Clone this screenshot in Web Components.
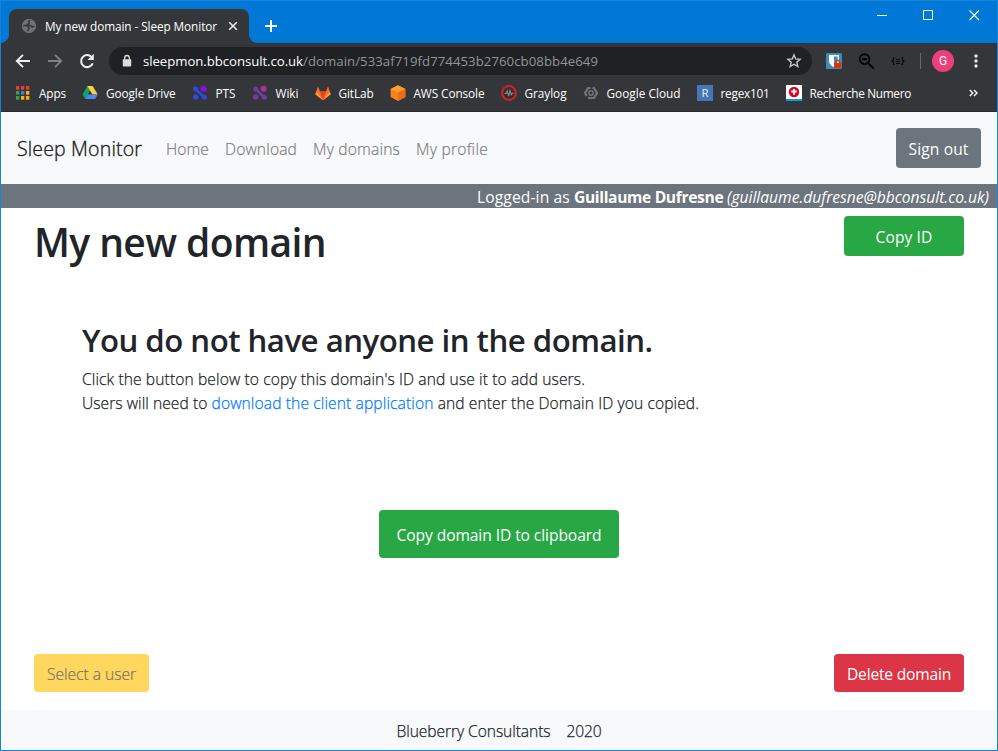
<!DOCTYPE html>
<html lang="en">
<head>
<meta charset="utf-8">
<title>My new domain - Sleep Monitor</title>
<style>
html,body{margin:0;height:100%;overflow:hidden}
body{font-family:"Open Sans","Noto Sans",sans-serif;color:#212529}
</style>
</head>
<body>
<browser-window>
  <title-bar slot="chrome"></title-bar>
  <tool-bar slot="chrome"></tool-bar>
  <bookmark-bar slot="chrome"></bookmark-bar>
  <site-nav></site-nav>
  <login-strip></login-strip>
  <domain-page></domain-page>
  <site-footer></site-footer>
</browser-window>
<script>
const define = (name, css, html) => customElements.define(name, class extends HTMLElement {
  constructor() {
    super();
    this.attachShadow({mode: 'open'}).innerHTML = `<style>*{box-sizing:border-box}${css}</style>${html}`;
  }
});

/* Text run that spreads its letters over a given width. */
customElements.define('ui-text', class extends HTMLElement {
  constructor() {
    super();
    this.attachShadow({mode: 'open'}).innerHTML =
      '<style>:host{display:inline-block;white-space:pre;flex:none}span{display:inline-block}</style><span><slot></slot></span>';
  }
  connectedCallback() {
    const w = parseFloat(this.getAttribute('w'));
    const span = this.shadowRoot.querySelector('span');
    const n = this.textContent.length;
    const natural = span.getBoundingClientRect().width;
    span.style.letterSpacing = ((w - natural) / n).toFixed(4) + 'px';
    this.style.width = w + 'px';
  }
});

/* Bootstrap-like button. */
define('ui-button', `
:host{display:flex;align-items:center;justify-content:center;box-sizing:border-box;flex:none;border-radius:4px;color:#fff;height:40px;padding-top:2px;font-size:15.6px;line-height:24px}
:host([kind=secondary]){background:#6c757d}
:host([kind=success]){background:#28a745}
:host([kind=danger]){background:#dc3545}
:host([kind=warning]){background:#ffd75f;color:#76756a;font-weight:300;-webkit-text-stroke:.2px}
`, `<slot></slot>`);

define('browser-window', `
:host{display:flex;flex-direction:column;width:998px;height:751px;box-sizing:border-box;border:1px solid #1883d7;background:#fff}
.page{flex:1;display:flex;flex-direction:column;min-height:0}
`, `<slot name="chrome"></slot><div class="page"><slot></slot></div>`);

define('title-bar', `
:host{display:flex;height:42px;background:#0078d7;color:#fff;padding-left:8px}
.tab{position:relative;margin-top:8px;width:240px;height:34px;background:#35363a;border-radius:8px 8px 0 0;display:flex;align-items:center;padding-left:12px;font-size:11.8px}
.tab::before,.tab::after{content:"";position:absolute;bottom:0;width:8px;height:8px}
.tab::before{left:-8px;background:radial-gradient(circle at 0 0,#0078d7 7.5px,#35363a 8px)}
.tab::after{right:-8px;background:radial-gradient(circle at 100% 0,#0078d7 7.5px,#35363a 8px)}
ui-text{margin:0 10px 0 8px}
.plus{margin:18px 0 0 15px}
.ctl{margin-left:auto;display:flex;gap:36px;padding:9px 17px 0 0}
svg{display:block;flex:none}
`, `<div class="tab">
<svg width="16" height="16" viewBox="0 0 16 16"><circle cx="8" cy="8" r="7" fill="#6d7074"/><path d="M9.300 2.200C8 2.600 7.300 3.500 8 4.300c.7.600-.1 1.500-.9 1.600-1 .2-.8 1.300.1 1.500 1.400.2 2.500-.2 3.100.8.500.8 2 .6 3 0M2.300 7.500h3.200c1 .1.800 1.300 1.700 1.600 1 .3 1.200 1.300.3 1.900-.5.400-.3 1.500-.6 2.300" fill="none" stroke="#35363a" stroke-width="1.500"/><circle cx="8" cy="8" r="6.500" fill="none" stroke="#6d7074"/></svg>
<ui-text w="172">My new domain - Sleep Monitor</ui-text>
<svg width="12" height="12" viewBox="0 0 12 12"><path d="M2.200 2.200l7.600 7.600M9.800 2.200L2.200 9.800" stroke="#e8eaed" stroke-width="1.600"/></svg></div>
<svg class="plus" width="13" height="13" viewBox="0 0 13 13"><path d="M7 1v12M1 7h12" stroke="#fff" stroke-width="2"/></svg>
<div class="ctl"><svg width="10" height="11"><path d="M0 5.500h10" stroke="#fff"/></svg><svg width="10" height="10"><path d="M.5 .5h9v9h-9z" fill="none" stroke="#fff"/></svg><svg width="11" height="11"><path d="M.5 .5l9.500 9.500M10 .5L.5 10" stroke="#fff" stroke-width="1.100"/></svg></div>`);

define('tool-bar', `
:host{display:flex;height:36px;background:#35363a;align-items:center;padding-left:14px}
svg{display:block;flex:none}
.omni{width:703px;height:28px;border-radius:14px;background:#202124;display:flex;align-items:center;margin-left:14px;padding:0 10px 0 13px;font-size:13.2px;color:#fff}
.path{color:#929599}
.star{margin-left:auto}
.ext{display:flex;align-items:center;gap:16px;margin-left:14px}
.sep{width:1px;height:16px;background:#67686b;margin:0 11px 0 15px}
.avatar{width:22px;height:22px;border-radius:50%;background:#ec407a;color:#fff;font:12px/22px Roboto,sans-serif;text-align:center}
`, `
<svg width="16" height="16" viewBox="0 0 16 16"><path d="M15 8H2.500M8 1.800L1.800 8 8 14.200" fill="none" stroke="#eef0f2" stroke-width="1.900"/></svg>
<svg width="16" height="16" viewBox="0 0 16 16" style="margin-left:16px"><path d="M1 8h12.500M8 1.800L14.200 8 8 14.200" fill="none" stroke="#7e7f82" stroke-width="1.900"/></svg>
<svg width="16" height="16" viewBox="0 0 16 16" style="margin-left:16px"><path d="M13.700 10.300A6 6 0 1 1 12.500 4" fill="none" stroke="#eef0f2" stroke-width="2"/><path d="M14.800 .8v6.200H8.600z" fill="#eef0f2"/></svg>
<div class="omni"><svg width="10" height="14" viewBox="0 0 10 14" style="margin-right:11px"><path d="M.8 5.200h8.400v6.600q0 .8-.8.800H1.600q-.8 0-.8-.8z" fill="#dadce0"/><path d="M2.700 5.500V3.800a2.300 2.300 0 0 1 4.600 0v1.700" fill="none" stroke="#dadce0" stroke-width="1.300"/></svg><ui-text w="160">sleepmon.bbconsult.co.uk</ui-text><ui-text w="295" class="path">/domain/533af719fd774453b2760cb08bb4e649</ui-text>
<svg class="star" width="16" height="16" viewBox="0 0 16 16"><path d="M8 1.900l1.700 4 4.400.4-3.300 2.900 1 4.300L8 11.200l-3.800 2.300 1-4.300L1.900 6.300l4.400-.4z" fill="none" stroke="#c4c7ca" stroke-width="1.400"/></svg></div>
<div class="ext">
<svg width="16" height="16" viewBox="0 0 16 16"><rect width="16" height="16" rx="1.500" fill="#3c8dbc"/><path d="M3 2h10v6c0 3-2.500 5-5 6.200C5.500 13 3 11 3 8z" fill="#fff"/><path d="M8 3.500h3.600v5c0 1.800-1.700 3-3.600 4z" fill="#3c8dbc"/><path d="M10 10.500V9a1.800 1.800 0 0 1 3.600 0v1.500" fill="none" stroke="#cf3508" stroke-width="1.200"/><path d="M8 10h7.500v5H8z" fill="#d63808"/></svg>
<svg width="17" height="17" viewBox="0 0 17 17"><circle cx="6.500" cy="6.200" r="4.900" fill="none" stroke="#000" stroke-width="1.900"/><path d="M4 6.200h5M10 10l5.800 5.800" stroke="#000" stroke-width="2"/></svg>
<svg width="14" height="16" viewBox="0 0 14 16"><path d="M3.500 4.500h-1v2.500L1 8l1.500 1v2.500h1M10.500 4.500h1v2.500L13 8l-1.500 1v2.500h-1" fill="none" stroke="#0a0a0a" stroke-width="1.200"/><path d="M5 6.500h4M5 8.500h4M5 10.500h4" stroke="#0a0a0a"/></svg></div>
<div class="sep"></div><div class="avatar">G</div>
<svg width="4" height="14" viewBox="0 0 4 14" style="margin-left:20px"><g fill="#e8eaed"><circle cx="2" cy="2" r="1.700"/><circle cx="2" cy="7" r="1.700"/><circle cx="2" cy="12" r="1.700"/></g></svg>`);

const drive = '<path d="M5.300 1h5.400L5.800 9.600 3.200 14 .5 9.400z" fill="#12a45c"/><path d="M5.300 1h5.400l5 8.600h-5.300z" fill="#ffcf40"/><path d="M5.600 9.600h10.100L13.200 14H3.200z" fill="#4688f4"/>';
const nodes = (a, b) => `<path d="M3.500 4l9 8.500" stroke="${a}" stroke-width="2.600"/><circle cx="3.600" cy="4" r="2.500" fill="${a}"/><circle cx="11.700" cy="3.800" r="3" fill="${b}"/><circle cx="3.700" cy="12" r="2.800" fill="${a}"/><circle cx="12.300" cy="12.300" r="2.500" fill="${a}"/>`;
const apps = [1, 6, 11].flatMap((y, r) => [1, 6, 11].map((x, c) =>
  `<rect x="${x}" y="${y}" width="3.300" height="3.700" fill="${[['#ef3b38','#ef3b38','#ef3b38'],['#30a350','#3b7de8','#f5b400'],['#30a350','#f5b400','#f5b400']][r][c]}"/>`)).join('');
const marks = [
  ['Apps', 27, apps], ['Google Drive', 69.5, drive],
  ['PTS', 20, nodes('#3048e0', '#8410f0')], ['Wiki', 23, nodes('#6b3fa0', '#b82ca0')],
  ['GitLab', 35, '<path d="M8 15.200L.3 9.300 3 1.300l2 5.300h6l2-5.300 2.700 8z" fill="#fc6d26"/><path d="M8 15.200L5 6.600h6z" fill="#e24329"/><path d="M8 15.200L.3 9.300l1-2.800zM8 15.200l7.700-5.900-1-2.800z" fill="#fca326"/>'],
  ['AWS Console', 71, '<path d="M8 .3l7.400 3.800v8L8 15.900.6 12.100v-8z" fill="#f58220"/><path d="M8 .3l7.400 3.800L8 7.800.6 4.100z" fill="#ff9d2e"/><path d="M8 7.800l7.400-3.700v8L8 15.900z" fill="#ea6b18"/>'],
  ['Graylog', 42, '<circle cx="8" cy="8" r="6.900" fill="#303236" stroke="#db2028" stroke-width="2"/><path d="M3.500 8.500h1.700L6.300 6l1.400 5L9 5.500l1.300 4.200 1-1.500h1.500" fill="none" stroke="#85888b" stroke-width="1.100"/>'],
  ['Google Cloud', 74, '<path d="M7.500 3H5L2 8l1.700 3M5 13h6l3-5-3-5H9.500" fill="none" stroke="#727477" stroke-width="2.200"/><circle cx="8" cy="8" r="2.200" fill="none" stroke="#727477" stroke-width="1.500"/>'],
  ['regex101', 49, '<rect width="16" height="16" fill="#4277b8"/><text x="8" y="12.300" font-family="Open Sans" font-size="11.500" fill="#e4ecf5" text-anchor="middle">R</text>'],
  ['Recherche Numero', 101.5, '<path d="M0 0h16v14H0z" fill="#fff"/><path d="M0 14h16v2H0z" fill="#009de0"/><circle cx="8" cy="7" r="5.200" fill="#e2001a"/><path d="M8 4v5.800M5.200 6.500h5.600" stroke="#fff" stroke-width="2"/>']
];
define('bookmark-bar', `
:host{display:flex;height:33px;background:#35363a;border-bottom:1px solid #292a2d;box-sizing:border-box;align-items:center;padding:0 19px 5px 14px;color:#fff;font-size:11.800px;flex:none}
.m{display:flex;align-items:center;gap:8px;margin-right:16px}
.m:last-of-type{margin-right:0}
svg{display:block;flex:none}
.more{margin-left:auto}
`, marks.map(([t, w, i]) => `<div class="m"><svg width="16" height="16" viewBox="0 0 16 16">${i}</svg><ui-text w="${w}">${t}</ui-text></div>`).join('') +
`<svg class="more" width="9" height="8" viewBox="0 0 9 8"><path d="M.8 1l3 3-3 3M5 1l3 3-3 3" fill="none" stroke="#f1f3f4" stroke-width="1.500"/></svg>`);

define('site-nav', `
:host{display:flex;height:72px;background:#f8f9fa;align-items:center;padding:0 16px;flex:none;font-size:15.600px}
.brand{font-size:19.500px;margin-right:24px;font-weight:300;-webkit-text-stroke:.35px;color:#1c1d1e}
nav{display:flex;gap:16px;color:#7b7c7c;font-weight:300;-webkit-text-stroke:.2px;padding-top:2px}
ui-button{margin-left:auto;width:85px}
`, `<ui-text class="brand" w="125">Sleep Monitor</ui-text>
<nav><ui-text w="43">Home</ui-text><ui-text w="72">Download</ui-text><ui-text w="87">My domains</ui-text><ui-text w="72">My profile</ui-text></nav>
<ui-button kind="secondary"><ui-text w="60">Sign out</ui-text></ui-button>`);

define('login-strip', `
:host{display:flex;justify-content:flex-end;height:24px;background:#6c757d;color:#fff;padding-right:8px;font-size:15.600px;line-height:26px;flex:none}
`, `<ui-text w="97">Logged-in as </ui-text><ui-text w="153"><b>Guillaume Dufresne</b> </ui-text><ui-text w="262"><i>(guillaume.dufresne@bbconsult.co.uk)</i></ui-text>`);

define('domain-page', `
:host{display:flex;flex-direction:column;flex:1;padding:8px 33px 18px;font-size:15.600px;line-height:24px}
header,footer{display:flex;justify-content:space-between}
header{height:102px;align-items:flex-start}
h1,h2,p{margin:0;font-weight:600}
h1{font-size:39px;line-height:52px}
h2{font-size:31.200px;line-height:38px;margin:3px 0 8px}
.msg{padding-left:48px;display:flex;flex-direction:column}
p{font-weight:300;-webkit-text-stroke:.25px}
.link{color:#007bff}
.mid{display:flex;justify-content:center;margin-top:95px}
footer{margin-top:auto}
`, `<header><h1><ui-text w="292">My new domain</ui-text></h1><ui-button kind="success" style="width:120px"><ui-text w="57">Copy ID</ui-text></ui-button></header>
<section class="msg"><h2><ui-text w="570.500">You do not have anyone in the domain.</ui-text></h2>
<p><ui-text w="503">Click the button below to copy this domain's ID and use it to add users.</ui-text></p>
<p><ui-text w="129.500">Users will need to </ui-text><ui-text class="link" w="222">download the client application</ui-text><ui-text w="265.500"> and enter the Domain ID you copied.</ui-text></p></section>
<div class="mid"><ui-button kind="success" style="width:240px;height:48px"><ui-text w="205">Copy domain ID to clipboard</ui-text></ui-button></div>
<footer><ui-button kind="warning" style="width:115px;height:38px"><ui-text w="89">Select a user</ui-text></ui-button><ui-button kind="danger" style="width:130px;height:38px"><ui-text w="104">Delete domain</ui-text></ui-button></footer>`);

define('site-footer', `
:host{display:flex;justify-content:center;align-items:center;gap:16px;height:40px;box-sizing:border-box;padding-top:2px;background:#f8f9fa;font-size:15.600px;font-weight:300;-webkit-text-stroke:.25px;flex:none}
`, `<ui-text w="154">Blueberry Consultants</ui-text><ui-text w="35">2020</ui-text>`);
</script>
</body>
</html>
